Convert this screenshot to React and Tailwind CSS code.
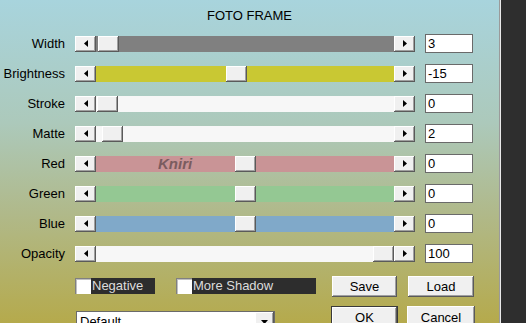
import React from 'react';

const rows = [
  { label: 'Width', track: 'bg-[#808080]', thumb: 'left-[2px]', value: '3' },
  { label: 'Brightness', track: 'bg-[#c9c833]', thumb: 'left-[130px]', value: '-15' },
  { label: 'Stroke', track: 'bg-[#f7f7f7]', thumb: 'left-[1px]', value: '0' },
  { label: 'Matte', track: 'bg-[#f7f7f7]', thumb: 'left-[6px]', value: '2' },
  { label: 'Red', track: 'bg-[#c99496]', thumb: 'left-[139px]', value: '0', mark: true },
  { label: 'Green', track: 'bg-[#94c893]', thumb: 'left-[139px]', value: '0' },
  { label: 'Blue', track: 'bg-[#80a9c9]', thumb: 'left-[139px]', value: '0' },
  { label: 'Opacity', track: 'bg-[#f7f7f7]', thumb: 'left-[277px]', value: '100' },
];

const raised =
  'bg-[#f0f0f0] shadow-[inset_-1px_-1px_0_#5a5a5a,inset_1px_1px_0_#ffffff,inset_-2px_-2px_0_#a0a0a0]';

const Arrow = ({ dir }) => (
  <svg width="4" height="7" viewBox="0 0 4 7">
    {dir === 'left' ? <path d="M4 0 L0 3.5 L4 7 Z" fill="#000" /> : <path d="M0 0 L4 3.5 L0 7 Z" fill="#000" />}
  </svg>
);

const SliderRow = ({ row }) => (
  <div className="flex items-center h-[19px]">
    <div className="w-[65px] text-right text-[13px] leading-[15px] text-black">{row.label}</div>
    <div className="ml-[10px] flex h-4 w-[340px]">
      <div className={`w-[21px] h-4 flex items-center justify-center ${raised}`}>
        <Arrow dir="left" />
      </div>
      <div className={`relative flex-1 h-4 ${row.track}`}>
        {row.mark && (
          <span className="absolute left-[62px] top-[-1px] text-[15px] leading-[17px] font-bold italic text-[#5a4448] opacity-70">
            Kniri
          </span>
        )}
        <div className={`absolute top-0 h-4 w-[21px] ${row.thumb} ${raised}`} />
      </div>
      <div className={`w-[21px] h-4 flex items-center justify-center ${raised}`}>
        <Arrow dir="right" />
      </div>
    </div>
    <div className="ml-[10px] w-[48px] h-[19px] bg-white border border-[#6a6a6a] px-[2px] text-[13px] leading-[17px] text-black">
      {row.value}
    </div>
  </div>
);

const Check = ({ label, w }) => (
  <div className="flex h-4 mt-[2px]">
    <div className="w-4 h-4 bg-white border-t border-l border-[#808080] shadow-[inset_1px_1px_0_#c0c0c0]" />
    <div className={`${w} h-4 bg-[#2d2d2d] text-[#dcdcdc] text-[13px] leading-4 pl-[1px]`}>{label}</div>
  </div>
);

export default function App() {
  return (
    <div className="flex w-[526px] h-[323px] overflow-hidden font-['Liberation_Sans',Arial,sans-serif]">
      <div className="w-[499px] h-full flex flex-col bg-[linear-gradient(180deg,#a8d4dd_0%,#acc9bb_38%,#b0b98a_66%,#b5aa4c_100%)]">
        <div className="pt-[8px] h-[23px] text-center text-[13px] leading-[15px] text-black">FOTO FRAME</div>
        <div className="mt-[11px] flex flex-col gap-[11px]">
          {rows.map((r) => (
            <SliderRow key={r.label} row={r} />
          ))}
        </div>
        <div className="mt-[13px] flex h-[21px]">
          <div className="ml-[75px] flex">
            <Check label="Negative" w="w-[64px]" />
            <div className="ml-[21px]">
              <Check label="More Shadow" w="w-[124px]" />
            </div>
          </div>
          <button className={`ml-[16px] w-[65px] h-[21px] text-[13px] text-black ${raised}`}>Save</button>
          <button className={`ml-[11px] w-[66px] h-[21px] text-[13px] text-black ${raised}`}>Load</button>
        </div>
        <div className="mt-[9px] flex">
          <div className="ml-[76px] mt-[5px] w-[199px] h-[22px] bg-white border border-[#6a6a6a] flex">
            <div className="flex-1 pl-[3px] text-[13px] leading-[20px] text-black">Default</div>
            <div className={`w-[19px] h-[20px] flex items-center justify-center ${raised}`}>
              <svg width="7" height="4" viewBox="0 0 7 4">
                <path d="M0 0 L7 0 L3.5 4 Z" fill="#000" />
              </svg>
            </div>
          </div>
          <button className={`ml-[56px] w-[67px] h-[24px] border border-[#3a3a3a] text-[13px] text-black ${raised}`}>OK</button>
          <button className={`ml-[9px] w-[68px] h-[24px] text-[13px] text-black ${raised}`}>Cancel</button>
        </div>
      </div>
      <div className="w-px h-full bg-[#9a9a9a]" />
      <div className="w-px h-full bg-[#e8e8e8]" />
      <div className="flex-1 h-full bg-[#2e2e2e]" />
    </div>
  );
}
